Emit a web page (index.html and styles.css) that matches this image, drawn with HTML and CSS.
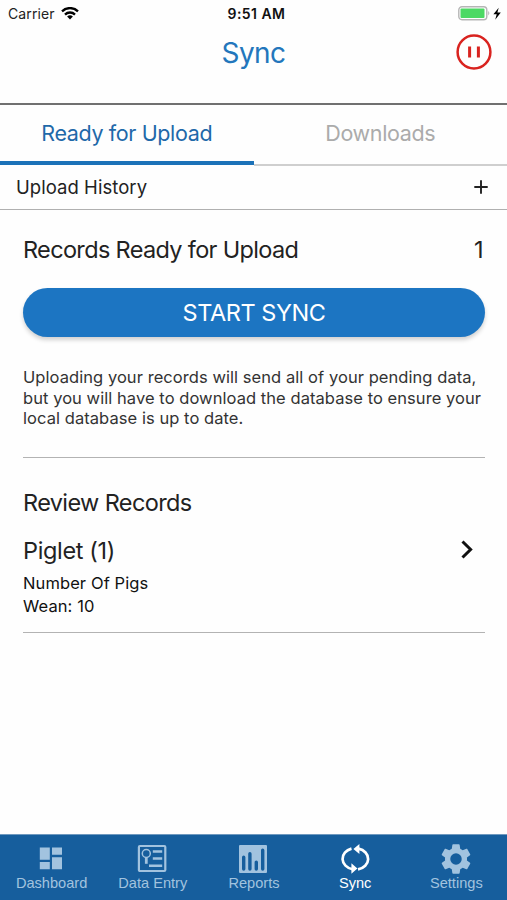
FILE: index.html
```html
<!DOCTYPE html>
<html lang="en">
<head>
<meta charset="utf-8">
<title>Sync</title>
<link rel="stylesheet" href="styles.css">
</head>
<body>
<header class="header">
  <div class="status">
    <div class="carrier"><span>Carrier</span>
      <svg width="18" height="13" viewBox="0 0 18 13" fill="none" stroke="#000" stroke-width="2.3"><path d="M1 4.3a11.5 11.5 0 0 1 16 0M4 7.6a7 7 0 0 1 10 0"/><path d="M6.1 9.5a4.3 4.3 0 0 1 5.8 0L9 12.5z" fill="#000" stroke="none"/></svg>
    </div>
    <div class="clock">9:51 AM</div>
    <div class="power">
      <svg width="43" height="15" viewBox="0 0 43 15"><rect x=".8" y=".8" width="28" height="13" rx="3.2" fill="#fff" stroke="#b5b5b5" stroke-width="1.4"/><rect x="2.5" y="2.6" width="24" height="9.4" rx="1" fill="#4cd964"/><path d="M30.3 5.1q2 2.2 0 4.4z" fill="#aaa"/><path d="M40.7 1.7 35.4 8.3h3.3l-1.5 5.4L42.8 6.6h-3.4z" fill="#000"/></svg>
    </div>
  </div>
  <div class="titlebar">
    <h1 class="title">Sync</h1>
    <svg class="pause" width="36" height="36" viewBox="0 0 36 36" fill="none" stroke="#d9231f"><circle cx="18" cy="18" r="16.4" stroke-width="2.5"/><path d="M13.6 12.5v11M22.4 12.5v11" stroke-width="3"/></svg>
  </div>
</header>
<nav class="tabs">
  <div class="tab active"><span>Ready for Upload</span></div>
  <div class="tab"><span>Downloads</span></div>
</nav>
<div class="history"><span>Upload History</span>
  <svg width="14" height="14" viewBox="0 0 14 14" stroke="#222" stroke-width="1.9"><path d="M7 .3v13.4M.3 7h13.4"/></svg>
</div>
<main class="main">
  <section class="upload">
    <div class="ready"><span>Records Ready for Upload</span><span class="count">1</span></div>
    <button class="start">START SYNC</button>
    <p class="note">Uploading your records will send all of your pending data,<br>but you will have to download the database to ensure your<br>local database is up to date.</p>
  </section>
  <section class="review">
    <h2 class="heading">Review Records</h2>
    <div class="group"><span>Piglet (1)</span>
      <svg class="chevron" width="12" height="19" viewBox="0 0 12 19" fill="none" stroke="#111" stroke-width="3"><path d="M1.5 1.5 9.6 9.5 1.5 17.5"/></svg>
    </div>
    <div class="detail">Number Of Pigs<br>Wean: 10</div>
  </section>
</main>
<footer class="nav">
  <div class="item"><svg width="30" height="30" viewBox="0 0 30 30" fill="currentColor"><path d="M3.8 3.4h10v12.4h-10zM16 3.4h10v7.4H16zM3.8 18.1h10v7.2h-10zM16 13.3h10v12H16z"/></svg><span>Dashboard</span></div>
  <div class="item"><svg width="30" height="30" viewBox="0 0 30 30" fill="none" stroke="currentColor"><rect x="1.9" y="2" width="26.4" height="25" rx="1" stroke-width="2.2"/><circle cx="9.3" cy="9.5" r="4" stroke-width="1.5"/><path d="M9.3 13.5v6.3" stroke-width="2.8"/><path d="M15.8 7.4h9.4M15.8 14.6h9.4M12 21.8h13.2" stroke-width="2.5"/></svg><span>Data Entry</span></div>
  <div class="item"><svg width="30" height="30" viewBox="0 0 30 30"><path d="M2 1h26q1 0 1 1v26q0 1-1 1H2q-1 0-1-1V2q0-1 1-1z" fill="currentColor"/><path d="M5.7 25V13.3M11.9 25V9.8M18.3 25V18.3M24.7 25V6.2" stroke="#165e9d" stroke-width="3.4" stroke-linecap="round"/></svg><span>Reports</span></div>
  <div class="item current"><svg width="30" height="30" viewBox="0 0 30 30"><g fill="none" stroke="currentColor" stroke-width="2.7"><path d="M11.5 4.6A12.9 10.7 0 0 0 12.5 25.2"/><path d="M18.5 4.6A12.9 10.7 0 0 1 18 25.4"/></g><path d="M19.4 0v10L13.4 5zM11.4 19.2v10.6l6-5.3z" fill="currentColor"/></svg><span>Sync</span></div>
  <div class="item"><svg width="30" height="30" viewBox="1.8 1.8 20.4 20.4" fill="currentColor"><path d="M19.43 12.98c.04-.32.07-.64.07-.98s-.03-.66-.07-.98l2.11-1.65c.19-.15.24-.42.12-.64l-2-3.46c-.12-.22-.39-.3-.61-.22l-2.49 1c-.52-.4-1.08-.73-1.69-.98l-.38-2.65C14.46 2.18 14.25 2 14 2h-4c-.25 0-.46.18-.49.42l-.38 2.65c-.61.25-1.17.59-1.69.98l-2.49-1c-.23-.09-.49 0-.61.22l-2 3.46c-.13.22-.07.49.12.64l2.11 1.65c-.04.32-.07.65-.07.98s.03.66.07.98l-2.11 1.65c-.19.15-.24.42-.12.64l2 3.46c.12.22.39.3.61.22l2.49-1c.52.4 1.08.73 1.69.98l.38 2.65c.03.24.24.42.49.42h4c.25 0 .46-.18.49-.42l.38-2.65c.61-.25 1.17-.59 1.69-.98l2.49 1c.23.09.49 0 .61-.22l2-3.46c.12-.22.07-.49-.12-.64zM12 15.9a3.9 3.9 0 1 1 0-7.8 3.9 3.9 0 0 1 0 7.8z"/></svg><span>Settings</span></div>
</footer>
</body>
</html>
```

FILE: styles.css
```css
* { box-sizing: border-box; }
html, body { height: 100%; }
body {
  margin: 0;
  display: flex;
  flex-direction: column;
  background: #fefefe;
  color: #222;
  font-family: Inter, "Liberation Sans", sans-serif;
}
.header { height: 105px; border-bottom: 2px solid #707070; flex: none; }
.status {
  height: 27px;
  display: grid;
  grid-template-columns: 1fr auto 1fr;
  align-items: center;
  padding: 0 6px 0 8px;
  font-size: 14px;
}
.carrier { display: flex; align-items: center; gap: 6px; letter-spacing: .12px; }
.clock { font-weight: 600; color: #111; letter-spacing: .45px; padding-left: 4px; }
.power { display: flex; justify-content: flex-end; }
.titlebar {
  display: grid;
  grid-template-columns: 1fr auto 1fr;
  align-items: center;
  height: 50px;
  padding: 0 15px;
}
.title {
  grid-column: 2;
  margin: 0;
  padding-top: 2px;
  font-size: 28px;
  font-weight: 400;
  letter-spacing: -.6px;
  color: #2376bc;
}
.pause { justify-self: end; }
.tabs { display: flex; height: 61px; flex: none; font-size: 21.5px; letter-spacing: -.37px; }
.tab {
  flex: 1;
  display: flex;
  align-items: center;
  justify-content: center;
  padding-bottom: 3px;
  border-bottom: 2px solid #cfcfcf;
  color: #ababab;
}
.active { padding-bottom: 0; border-bottom: 4px solid #1c72b8; color: #1f69a9; margin-bottom: 1px; }
.history {
  display: flex;
  align-items: center;
  justify-content: space-between;
  height: 44px;
  flex: none;
  padding: 0 19px 2px 16px;
  border-bottom: 1px solid #b0b0b0;
  font-size: 18.5px;
  letter-spacing: .05px;
}
.main { flex: 1; padding: 0 22px 0 23px; }
.upload { height: 248px; border-bottom: 1px solid #b3b3b3; padding-top: 25px; }
.ready {
  display: flex;
  justify-content: space-between;
  font-size: 23.5px;
  line-height: 30px;
  letter-spacing: -.66px;
}
.count { padding-right: 2px; }
.start {
  display: block;
  width: 100%;
  height: 49px;
  margin: 23px 0 30px;
  padding: 0;
  border: 0;
  border-radius: 25px;
  background: #1c75c2;
  box-shadow: 0 3px 4px rgba(0, 0, 0, .18);
  color: #fff;
  font: 23.5px Inter, sans-serif;
  letter-spacing: -.45px;
}
.note {
  margin: 0;
  font-size: 16.5px;
  line-height: 20.5px;
  letter-spacing: .06px;
  white-space: nowrap;
  color: #333;
}
.review { height: 175px; border-bottom: 1px solid #b3b3b3; padding-top: 30px; }
.heading { margin: 0; font-size: 23.5px; font-weight: 400; line-height: 30px; letter-spacing: -.62px; }
.group {
  display: flex;
  align-items: center;
  justify-content: space-between;
  margin-top: 18px;
  padding-right: 12px;
  font-size: 23.5px;
  line-height: 30px;
  letter-spacing: -.35px;
}
.chevron { margin-bottom: 3px; }
.detail { margin-top: 6px; font-size: 16.5px; line-height: 23px; letter-spacing: .1px; color: #111; }
.nav {
  display: grid;
  grid-template-columns: repeat(5, 101.2px);
  height: 66px;
  flex: none;
  padding: 9px 0 0 1px;
  border-top: 1px solid #6f99bf;
  background: #165e9d;
  font-family: "Liberation Sans", Arial, sans-serif;
  font-size: 14.6px;
}
.item { display: flex; flex-direction: column; align-items: center; color: #a2c3df; }
.item svg { margin-right: 1px; }
.item span { line-height: 19px; }
.current { color: #fff; }
```
